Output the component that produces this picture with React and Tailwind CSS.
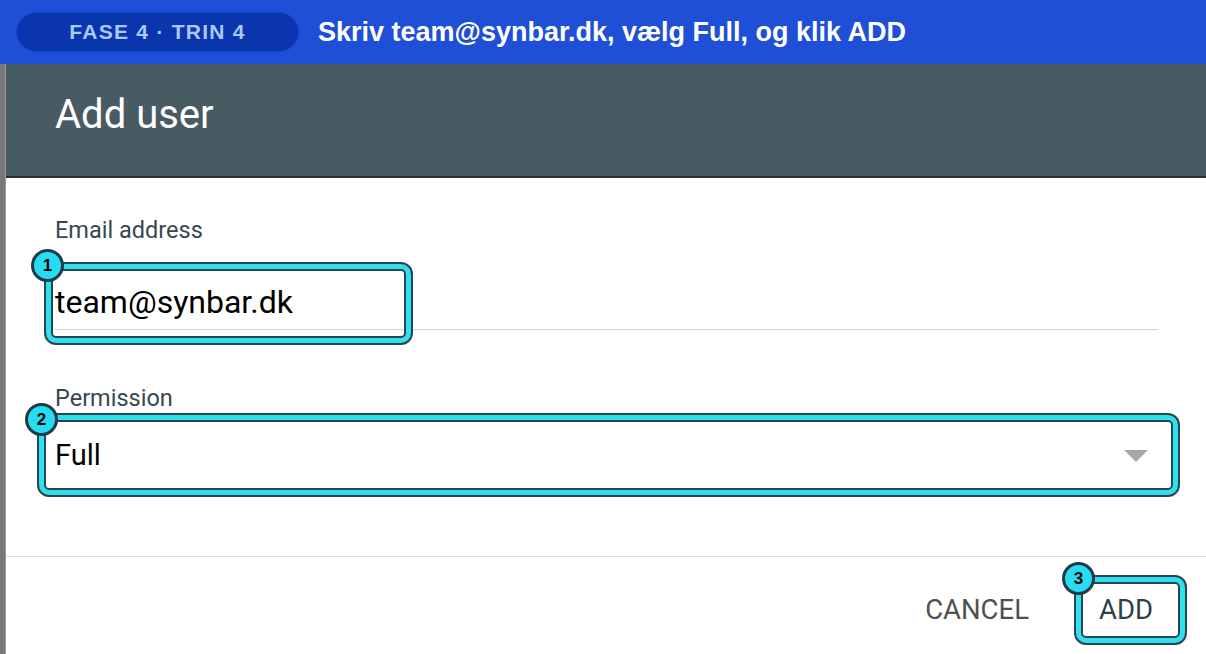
import React from 'react';

// Cyan callout frame that sits on top of a form control
const Callout = ({ n, className, badge }) => (
  <>
    <div
      className={`absolute rounded-[12px] border-2 border-[#2b4550] shadow-[inset_0_0_0_5px_#2fe0f0,inset_0_0_0_7px_#2b4550] pointer-events-none ${className}`}
    />
    <div
      className={`absolute w-[33px] h-[33px] rounded-full bg-[#26dcf0] border-[3px] border-[#1f3b46] flex items-center justify-center text-[17px] font-bold text-black ${badge}`}
      style={{ fontFamily: '"Liberation Sans", Arial, sans-serif' }}
    >
      {n}
    </div>
  </>
);

const App = () => {
  return (
    <div
      className="relative w-[1206px] h-[654px] overflow-hidden flex flex-col bg-white"
      style={{ fontFamily: 'Roboto, "Noto Sans", sans-serif' }}
    >
      {/* step banner */}
      <div
        className="h-[64px] shrink-0 bg-[#1e4fd6] flex items-center pl-[16px] gap-[19px]"
        style={{ fontFamily: '"Liberation Sans", Arial, sans-serif' }}
      >
        <div className="w-[283px] h-[40px] rounded-full bg-[#0b35ad] border border-[#1a45c4] flex items-center justify-center text-[21px] font-bold tracking-[0.06em] text-[#a9c9ff]">
          FASE 4 · TRIN 4
        </div>
        <div className="text-[27px] font-bold text-white">
          Skriv team@synbar.dk, vælg Full, og klik ADD
        </div>
      </div>

      <div className="flex-1 flex">
        <div className="w-[6px] bg-[#787878] border-r border-[#9a9a9a]" />

        <div className="flex-1 flex flex-col">
          {/* dialog title */}
          <div className="h-[114px] shrink-0 bg-[#485b63] border-b-2 border-[#263238] flex items-center pl-[49px] pb-[10px]">
            <h1 className="text-[40px] leading-none text-white">Add user</h1>
          </div>

          {/* form */}
          <div className="pl-[49px] pr-[48px] pt-[38px]">
            <div className="text-[23.5px] leading-[28px] text-[#37474f]">Email address</div>
            <div className="mt-[40px] pb-[8px] border-b border-[#d4d4d4]">
              <div className="text-[32px] leading-[37px] text-black">team@synbar.dk</div>
            </div>

            <div className="mt-[54px] text-[23.5px] leading-[28px] text-[#37474f]">Permission</div>
            <div className="mt-[26px] flex items-center justify-between pr-[10px]">
              <div className="text-[29px] leading-[35px] text-black">Full</div>
              <svg width="24" height="12" viewBox="0 0 24 12">
                <path d="M0 0 L24 0 L12 12 Z" fill="#a8a8a8" />
              </svg>
            </div>
          </div>

          {/* actions */}
          <div className="mt-auto h-[98px] border-t border-[#dcdcdc] flex items-start justify-end gap-[38px] pr-[37px] pt-[21px]">
            <button className="h-[64px] px-[16px] text-[27.5px] text-[#505050]">CANCEL</button>
            <button className="h-[64px] px-[16px] text-[27.5px] text-[#2f3f47]">ADD</button>
          </div>
        </div>
      </div>

      <Callout n="1" className="left-[44px] top-[262px] w-[369px] h-[83px]" badge="left-[31px] top-[249px]" />
      <Callout n="2" className="left-[37px] top-[413px] w-[1143px] h-[84px]" badge="left-[25px] top-[403px]" />
      <Callout n="3" className="left-[1074px] top-[575px] w-[113px] h-[70px]" badge="left-[1062px] top-[562px]" />
    </div>
  );
};

export default App;
